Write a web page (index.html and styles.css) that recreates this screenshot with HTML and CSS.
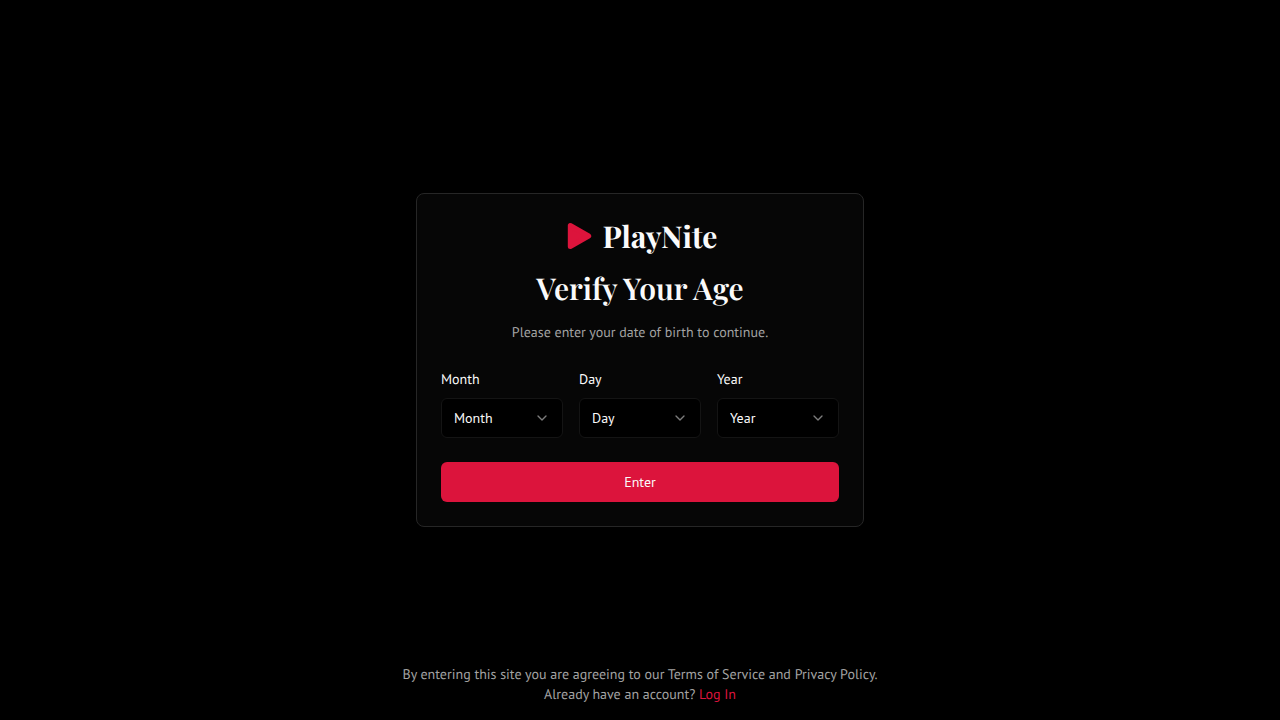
FILE: index.html
```html
<!DOCTYPE html>
<html lang="en">
<head>
<meta charset="utf-8">
<meta name="viewport" content="width=device-width, initial-scale=1">
<title>PlayNite</title>
<link rel="stylesheet" href="styles.css">
</head>
<body>
<div class="page">
  <main class="card">
    <header class="card-header">
      <div class="brand">
        <svg class="brand-icon" viewBox="0 0 32 32" aria-hidden="true"><path d="M7.3 5.5v21L25.7 16z"/></svg>
        <span>PlayNite</span>
      </div>
      <h1 class="title">Verify Your Age</h1>
      <p class="subtitle">Please enter your date of birth to continue.</p>
    </header>
    <form class="form">
      <div class="fields">
        <div class="field">
          <label for="month">Month</label>
          <div class="select-box">
            <select id="month"><option>Month</option></select>
            <svg class="chevron" viewBox="0 0 24 24" aria-hidden="true"><path d="m6 9 6 6 6-6"/></svg>
          </div>
        </div>
        <div class="field">
          <label for="day">Day</label>
          <div class="select-box">
            <select id="day"><option>Day</option></select>
            <svg class="chevron" viewBox="0 0 24 24" aria-hidden="true"><path d="m6 9 6 6 6-6"/></svg>
          </div>
        </div>
        <div class="field">
          <label for="year">Year</label>
          <div class="select-box">
            <select id="year"><option>Year</option></select>
            <svg class="chevron" viewBox="0 0 24 24" aria-hidden="true"><path d="m6 9 6 6 6-6"/></svg>
          </div>
        </div>
      </div>
      <button class="enter" type="submit">Enter</button>
    </form>
  </main>
  <footer class="footer">
    <p>By entering this site you are agreeing to our <a href="#terms">Terms of Service</a> and <a href="#privacy">Privacy Policy</a>.</p>
    <p>Already have an account? <a class="login" href="#login">Log In</a></p>
  </footer>
</div>
</body>
</html>
```
FILE: styles.css
```css
* { box-sizing: border-box; }

body {
  margin: 0;
  background: #000;
  color: #fafafa;
  font-family: "PT Sans", "Noto Sans", sans-serif;
  font-size: 14px;
  line-height: 20px;
  text-rendering: geometricPrecision;
}

p, h1 { margin: 0; }

a { color: inherit; text-decoration: none; }

.page {
  min-height: 100vh;
  display: grid;
  grid-template-rows: 1fr auto 1fr;
  justify-items: center;
  padding: 0 16px;
}

.card {
  grid-row: 2;
  width: 100%;
  max-width: 448px;
  padding: 24px;
  background: #060606;
  border: 1px solid #262626;
  border-radius: 8px;
}

.card-header {
  display: flex;
  flex-direction: column;
  align-items: center;
  gap: 16px;
  text-align: center;
}

.brand, .title {
  font-family: "Playfair Display", "Liberation Serif", serif;
  font-size: 30px;
  font-weight: 700;
  line-height: 36px;
}

.brand {
  display: flex;
  align-items: center;
  gap: 8px;
}

.brand-icon {
  width: 32px;
  height: 32px;
  fill: #dc143c;
  stroke: #dc143c;
  stroke-width: 5;
  stroke-linejoin: round;
}

.title { font-weight: 600; }

.subtitle { color: #a3a3a3; }

.form {
  display: grid;
  gap: 24px;
  margin-top: 24px;
}

.fields {
  display: grid;
  grid-template-columns: repeat(3, 1fr);
  gap: 16px;
}

.field {
  display: grid;
  gap: 6px;
}

.field label { line-height: 26px; }

.select-box { position: relative; }

select {
  appearance: none;
  display: block;
  width: 100%;
  height: 40px;
  padding: 0 36px 0 12px;
  background: #000;
  border: 1px solid #141414;
  border-radius: 6px;
  color: inherit;
  font: inherit;
}

.chevron {
  position: absolute;
  top: 12px;
  right: 13px;
  width: 16px;
  height: 16px;
  fill: none;
  stroke: #fafafa;
  stroke-width: 2;
  stroke-linecap: round;
  stroke-linejoin: round;
  opacity: 0.5;
  pointer-events: none;
}

.enter {
  height: 40px;
  border: 0;
  border-radius: 6px;
  background: #dc143c;
  color: #fafafa;
  font: inherit;
}

.footer {
  grid-row: 3;
  align-self: end;
  padding: 16px 0;
  color: #a3a3a3;
  text-align: center;
}

.login { color: #dc143c; }
```
